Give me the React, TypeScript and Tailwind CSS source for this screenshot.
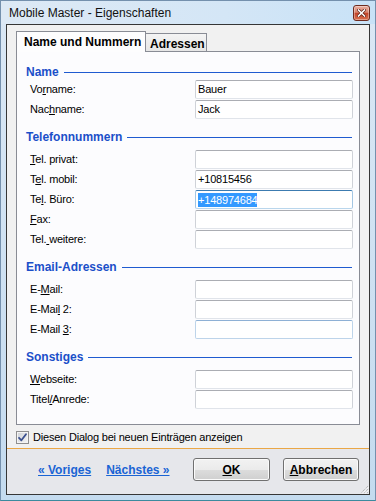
import React from "react";

type FieldState = "normal" | "focus" | "hover";

function Heading({ title, first }: { title: string; first?: boolean }) {
  return (
    <div
      className={`flex items-center h-[14px] pl-[9px] pr-[7px] gap-[5px] ${
        first ? "mt-[13px]" : "mt-[11px]"
      }`}
    >
      <span className="text-[12px] font-bold leading-[14px] text-[#1b4fc9]">{title}</span>
      <div className="flex-1 h-px bg-[#1f5bd0]" />
    </div>
  );
}

function Field({
  label,
  value,
  state = "normal",
}: {
  label: React.ReactNode;
  value?: React.ReactNode;
  state?: FieldState;
}) {
  const border =
    state === "focus"
      ? "border-[#a3c6e3] border-t-[#3c7bb0] border-b-[#b9d6ec]"
      : state === "hover"
      ? "border-[#bdd4ea] border-t-[#8eb0d5]"
      : "border-[#cfd2d8] border-t-[#abadb3] border-b-[#e0e4ea]";
  return (
    <div className="flex items-center h-[19px]">
      <div className="w-[178px] pl-[13px] text-[11px] tracking-[-0.2px] leading-[13px] text-black">
        {label}
      </div>
      <div
        className={`w-[158px] h-[19px] border rounded-[2px] bg-white flex items-center pl-[2px] text-[11px] tracking-[-0.2px] text-black ${border}`}
      >
        {value}
      </div>
    </div>
  );
}

function Btn({ children, w }: { children: React.ReactNode; w: string }) {
  return (
    <div
      className={`${w} h-[23px] rounded-[3px] border border-[#707070] bg-[linear-gradient(to_bottom,#f2f2f2_0%,#ebebeb_50%,#dddddd_50%,#cfcfcf_100%)] shadow-[inset_0_0_0_1px_#fbfbfb] flex items-center justify-center text-[12px] font-bold text-black`}
    >
      {children}
    </div>
  );
}

export default function App() {
  return (
    <div className="w-[376px] h-[501px] flex flex-col border border-[#7490ad] border-b-[#3b8a9e] bg-[linear-gradient(to_bottom,#dbe8f5,#c4dbef)] font-['Liberation_Sans',Arial,sans-serif] select-none">
      {/* Title bar */}
      <div className="h-[23px] flex items-center pl-[8px] pr-[5px] bg-[linear-gradient(to_right,#dde9f5,#d4e6f6_60%,#c8e2f7)]">
        <span className="text-[12px] text-[#111] leading-[14px]">Mobile Master - Eigenschaften</span>
        <div className="ml-auto w-[17px] h-[16px] rounded-[3px] border border-[#6e2b1f] bg-[linear-gradient(to_bottom,#eab0a2_0%,#d8826c_45%,#c2442b_52%,#d9704f_100%)] shadow-[inset_0_0_0_1px_rgba(255,255,255,0.35)] flex items-center justify-center">
          <svg width="9" height="8" viewBox="0 0 9 8">
            <path d="M1.5 1 L7.5 7 M7.5 1 L1.5 7" stroke="#5a1d12" strokeWidth="3" strokeLinecap="square" />
            <path d="M1.5 1 L7.5 7 M7.5 1 L1.5 7" stroke="#ffffff" strokeWidth="1.6" strokeLinecap="square" />
          </svg>
        </div>
      </div>

      {/* Client */}
      <div className="relative flex-1 mx-[5px] mb-[5px] border border-[#363636] bg-[#f1f1f1] flex flex-col">
        {/* Tabs */}
        <div className="flex items-end pt-[6px] pl-[9px] h-[26px]">
          <div className="relative z-10 -mb-px w-[130px] h-[21px] border-l border-t border-r border-[#898c95] bg-[#fdfdfe] flex items-center pl-[7px] text-[12px] font-bold text-black">
            Name und Nummern
          </div>
          <div className="w-[61px] h-[18px] border-t border-r border-[#898c95] bg-[linear-gradient(to_bottom,#f4f4f4,#e6e6e6)] flex items-center pl-[4px] pt-[2px] text-[12px] font-bold text-black">
            Adressen
          </div>
        </div>

        {/* Panel */}
        <div className="ml-[9px] w-[344px] border border-[#898c95] bg-[#fcfcfe] pb-[15px]">
          <Heading title="Name" first />
          <div className="flex flex-col gap-[1px] mt-[1px]">
            <Field label={<>Vo<u>r</u>name:</>} value="Bauer" />
            <Field label={<>Nac<u>h</u>name:</>} value="Jack" />
          </div>

          <Heading title="Telefonnummern" />
          <div className="flex flex-col gap-[1px] mt-[6px]">
            <Field label={<><u>T</u>el. privat:</>} />
            <Field label={<>T<u>e</u>l. mobil:</>} value="+10815456" />
            <Field
              label={<>Te<u>l</u>. Büro:</>}
              state="focus"
              value={<span className="bg-[#3399ff] text-white leading-[14px] inline-block">+148974684</span>}
            />
            <Field label={<><u>F</u>ax:</>} />
            <Field label={<>Tel.<u> </u>weitere:</>} />
          </div>

          <Heading title="Email-Adressen" />
          <div className="flex flex-col gap-[1px] mt-[6px]">
            <Field label={<>E-<u>M</u>ail:</>} />
            <Field label={<>E-Mai<u>l</u> 2:</>} />
            <Field label={<>E-Mail <u>3</u>:</>} state="hover" />
          </div>

          <Heading title="Sonstiges" />
          <div className="flex flex-col gap-[1px] mt-[6px]">
            <Field label={<><u>W</u>ebseite:</>} />
            <Field label={<>Titel<u>/</u>Anrede:</>} />
          </div>
        </div>

        {/* Checkbox */}
        <div className="flex items-center h-[13px] mt-[6px] pl-[9px] gap-[4px]">
          <div className="w-[13px] h-[13px] border border-[#8f8f8f] bg-[linear-gradient(135deg,#cfd2d6,#f6f6f6)] shadow-[inset_0_0_0_1px_#f4f4f4] flex items-center justify-center">
            <svg width="11" height="11" viewBox="0 0 11 11">
              <path d="M2 5.8 L4.4 8.3 L9 2.2" fill="none" stroke="#3a4f8e" strokeWidth="1.8" strokeLinecap="round" strokeLinejoin="round" />
            </svg>
          </div>
          <span className="text-[11px] tracking-[-0.2px] leading-[13px] text-black">
            Diesen Dialog bei neuen Einträgen anzeigen
          </span>
        </div>

        <div className="mt-[4px] h-px bg-[#eaa746]" />

        {/* Footer */}
        <div className="flex-1 bg-[#e6e7eb] flex items-start pt-[9px] pl-[31px] pr-[10px]">
          <div className="flex items-center h-[23px] gap-[15px] text-[12px] font-bold text-[#1a64d4]">
            <span className="underline">« Voriges</span>
            <span className="underline">Nächstes »</span>
          </div>
          <div className="ml-auto flex gap-[13px]">
            <Btn w="w-[77px]">
              <span>
                <u>O</u>K
              </span>
            </Btn>
            <Btn w="w-[76px]">
              <span>
                <u>A</u>bbrechen
              </span>
            </Btn>
          </div>
        </div>

        {/* Resize grip */}
        <svg className="absolute right-0 bottom-0" width="11" height="11" viewBox="0 0 11 11">
          <path d="M10 3 L3 10 M10 6 L6 10 M10 9 L9 10" stroke="#a8a8a8" strokeWidth="1" strokeDasharray="1 1" />
          <path d="M11 4 L4 11 M11 7 L7 11" stroke="#ffffff" strokeWidth="1" strokeDasharray="1 1" />
        </svg>
      </div>
    </div>
  );
}
